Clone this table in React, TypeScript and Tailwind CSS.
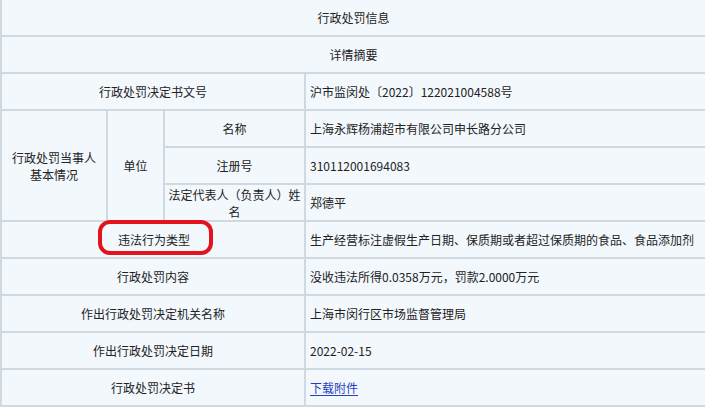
const cell = "bg-[#f3f8fd] flex items-center";
const label = `${cell} justify-center text-center`;
const value = `${cell} justify-start pl-[4px] pr-2`;

const rows: { label: string; value: React.ReactNode }[] = [
  { label: "行政处罚内容", value: "没收违法所得0.0358万元，罚款2.0000万元" },
  { label: "作出行政处罚决定机关名称", value: "上海市闵行区市场监督管理局" },
  { label: "作出行政处罚决定日期", value: "2022-02-15" },
  {
    label: "行政处罚决定书",
    value: (
      <a href="#" className="text-[#2a3fbf] underline underline-offset-2">
        下载附件
      </a>
    ),
  },
];

export default function App() {
  return (
    <div
      className="w-[705px] h-[409px] overflow-hidden bg-white text-[12px] leading-[17px] text-[#222]"
      style={{ fontFamily: '"Noto Sans CJK SC", "Microsoft YaHei", sans-serif' }}
    >
      <div className="grid grid-cols-[104px_55px_139px_1fr] auto-rows-[35px] gap-[2px] bg-[#cfd9e2] pl-[2px] pb-[2px]">
        {/* Header */}
        <div className={`${label} col-span-4`}>行政处罚信息</div>
        <div className={`${label} col-span-4`}>详情摘要</div>

        <div className={`${label} col-span-3`}>行政处罚决定书文号</div>
        <div className={value}>沪市监闵处〔2022〕122021004588号</div>

        {/* Party info */}
        <div className={`${label} row-span-3`}>
          行政处罚当事人
          <br />
          基本情况
        </div>
        <div className={`${label} row-span-3`}>单位</div>
        <div className={label}>名称</div>
        <div className={value}>上海永辉杨浦超市有限公司申长路分公司</div>
        <div className={label}>注册号</div>
        <div className={value}>310112001694083</div>
        <div className={`${label} px-[2px]`}>法定代表人（负责人）姓名</div>
        <div className={value}>郑德平</div>

        {/* Violation type, circled */}
        <div className={`${label} col-span-3 relative`}>
          <span className="pl-[2px]">违法行为类型</span>
          <div className="absolute left-[96px] top-[-2px] w-[115px] h-[35px] rounded-[12px] border-4 border-[#e3121c]" />
        </div>
        <div className={value}>生产经营标注虚假生产日期、保质期或者超过保质期的食品、食品添加剂</div>

        {rows.map((r) => (
          <div key={r.label} className="contents">
            <div className={`${label} col-span-3`}>{r.label}</div>
            <div className={value}>{r.value}</div>
          </div>
        ))}
      </div>
    </div>
  );
}
